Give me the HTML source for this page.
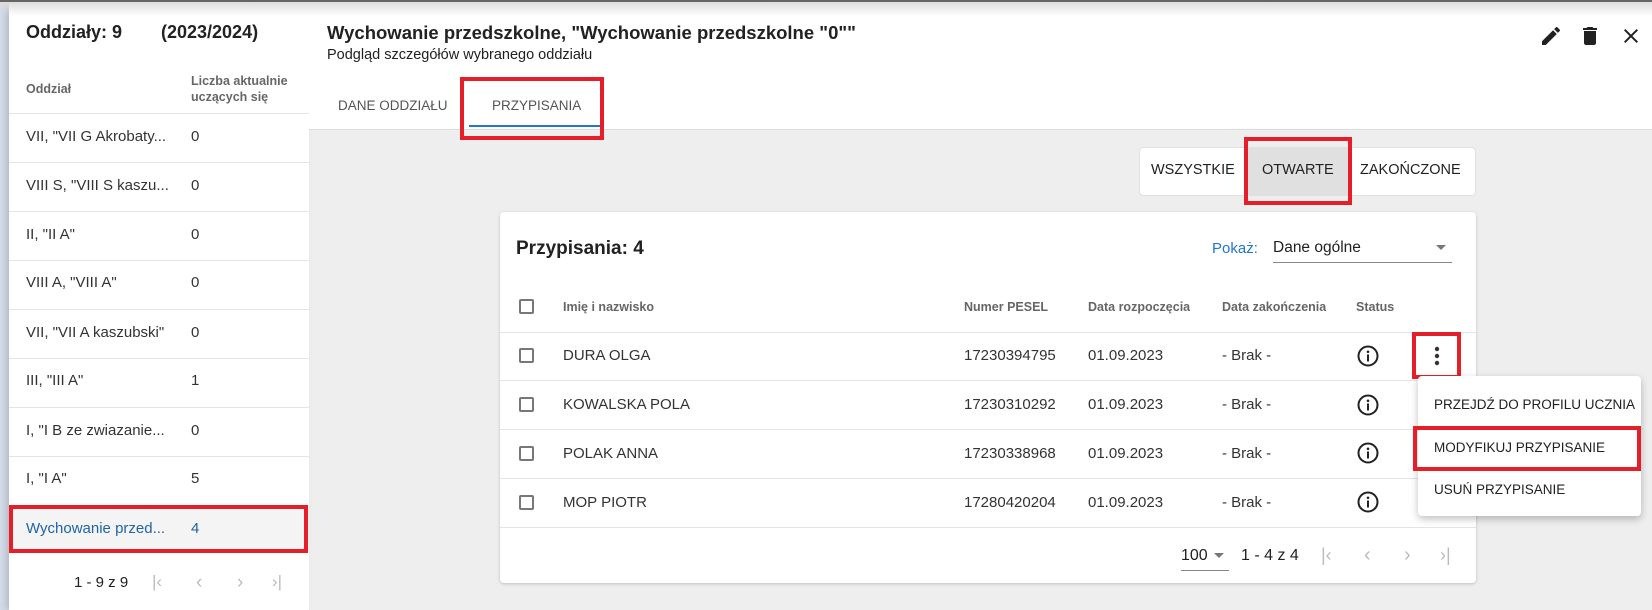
<!DOCTYPE html>
<html><head><meta charset="utf-8"><style>
*{box-sizing:border-box;margin:0;padding:0}
body{width:1652px;height:610px;overflow:hidden;position:relative;background:#eeeeee;font-family:"Liberation Sans",Roboto,sans-serif;color:#212121}
.a{position:absolute;white-space:nowrap}
.red{position:absolute;border:4px solid #e61e2a}
.hd{font-size:12.5px;font-weight:bold;color:#666}
.t{font-size:15px;color:#333}
.line{position:absolute;height:1px;background:#e4e4e4}
</style></head><body>
<div class="a" style="left:0;top:0;width:9px;height:610px;background:#d3dbe8"></div>
<div class="a" style="left:9px;top:0;width:300px;height:610px;background:#fff;box-shadow:-3px 0 6px rgba(0,0,0,.15)"></div>
<div class="a" style="left:309px;top:0;width:1343px;height:130px;background:#fff;border-bottom:1px solid #ddd"></div>
<div class="a" style="left:0;top:0;width:1652px;height:2px;background:#666"></div>
<div class="a" style="left:0;top:2px;width:1652px;height:14px;background:linear-gradient(#ddd,rgba(255,255,255,0))"></div>

<div class="a" style="left:26px;top:22px;font-size:18px;font-weight:bold">Oddziały: 9</div>
<div class="a" style="left:161px;top:22px;font-size:18px;font-weight:bold">(2023/2024)</div>
<div class="a hd" style="left:26px;top:82px">Oddział</div>
<div class="a hd" style="left:191px;top:73px;line-height:16px">Liczba aktualnie<br>uczących się</div>
<div class="line" style="left:9px;width:300px;top:113px"></div>
<div class="a t" style="left:26px;top:128px">VII, "VII G Akrobaty...</div><div class="a t" style="left:191px;top:128px">0</div>
<div class="line" style="left:9px;width:300px;top:162px"></div>
<div class="a t" style="left:26px;top:177px">VIII S, "VIII S kaszu...</div><div class="a t" style="left:191px;top:177px">0</div>
<div class="line" style="left:9px;width:300px;top:211px"></div>
<div class="a t" style="left:26px;top:226px">II, "II A"</div><div class="a t" style="left:191px;top:226px">0</div>
<div class="line" style="left:9px;width:300px;top:260px"></div>
<div class="a t" style="left:26px;top:274px">VIII A, "VIII A"</div><div class="a t" style="left:191px;top:274px">0</div>
<div class="line" style="left:9px;width:300px;top:309px"></div>
<div class="a t" style="left:26px;top:324px">VII, "VII A kaszubski"</div><div class="a t" style="left:191px;top:324px">0</div>
<div class="line" style="left:9px;width:300px;top:358px"></div>
<div class="a t" style="left:26px;top:372px">III, "III A"</div><div class="a t" style="left:191px;top:372px">1</div>
<div class="line" style="left:9px;width:300px;top:407px"></div>
<div class="a t" style="left:26px;top:422px">I, "I B ze zwiazanie...</div><div class="a t" style="left:191px;top:422px">0</div>
<div class="line" style="left:9px;width:300px;top:456px"></div>
<div class="a t" style="left:26px;top:470px">I, "I A"</div><div class="a t" style="left:191px;top:470px">5</div>
<div class="line" style="left:9px;width:300px;top:505px"></div>
<div class="a" style="left:9px;top:505px;width:300px;height:48px;background:#f4f4f4"></div>
<div class="a t" style="left:26px;top:520px;color:#1e64a6">Wychowanie przed...</div><div class="a t" style="left:191px;top:520px;color:#1e64a6">4</div>
<div class="red" style="left:9px;top:505px;width:299px;height:48px"></div>
<div class="a" style="left:74px;top:574px;font-size:15px">1 - 9 z 9</div>
<div class="a" style="left:152px;top:572px;font-size:17px;color:#bbb">|&lsaquo;</div>
<div class="a" style="left:196px;top:572px;font-size:19px;color:#bbb">&lsaquo;</div>
<div class="a" style="left:237px;top:572px;font-size:19px;color:#bbb">&rsaquo;</div>
<div class="a" style="left:272px;top:572px;font-size:17px;color:#bbb">&rsaquo;|</div>

<div class="a" style="left:327px;top:22px;font-size:18.5px;font-weight:bold;color:#222">Wychowanie przedszkolne, "Wychowanie przedszkolne "0""</div>
<div class="a" style="left:327px;top:47px;font-size:14.5px">Podgląd szczegółów wybranego oddziału</div>
<div class="a" style="left:338px;top:98px;font-size:13.5px;color:#555">DANE ODDZIAŁU</div>
<div class="a" style="left:492px;top:98px;font-size:13.5px;color:#555">PRZYPISANIA</div>
<div class="a" style="left:469px;top:125px;width:131px;height:2px;background:#1f77d0"></div>
<div class="red" style="left:460px;top:77px;width:144px;height:63px"></div>
<svg class="a" style="left:1539px;top:24px" width="24" height="24" viewBox="0 0 24 24"><path fill="#212121" d="M3 17.25V21h3.75L17.81 9.94l-3.75-3.75L3 17.25zM20.71 7.04a1 1 0 000-1.410l-2.34-2.34a1 1 0 00-1.41 0l-1.83 1.83 3.75 3.75 1.83-1.83z"/></svg>
<svg class="a" style="left:1578px;top:23px" width="24" height="26" viewBox="0 0 24 24"><path fill="#212121" d="M6 19c0 1.1.9 2 2 2h8c1.1 0 2-.9 2-2V7H6v12zM19 4h-3.5l-1-1h-5l-1 1H5v2h14V4z"/></svg>
<svg class="a" style="left:1619px;top:24px" width="24" height="24" viewBox="0 0 24 24"><path fill="#212121" d="M19 6.41L17.59 5 12 10.59 6.41 5 5 6.410 10.59 12 5 17.59 6.41 19 12 13.41 17.59 19 19 17.59 13.41 12z"/></svg>

<div class="a" style="left:1139px;top:147px;width:337px;height:49px;background:#fff;border:1px solid #e0e0e0;border-radius:4px"></div>
<div class="a" style="left:1248px;top:147px;width:100px;height:49px;background:#e0e0e0"></div>
<div class="a" style="left:1151px;top:162px;font-size:14.5px">WSZYSTKIE</div>
<div class="a" style="left:1262px;top:162px;font-size:14.5px">OTWARTE</div>
<div class="a" style="left:1360px;top:162px;font-size:14.5px">ZAKOŃCZONE</div>
<div class="red" style="left:1244px;top:137px;width:108px;height:68px"></div>

<div class="a" style="left:500px;top:212px;width:976px;height:371px;background:#fff;border-radius:4px;box-shadow:0 1px 3px rgba(0,0,0,.2)"></div>
<div class="a" style="left:516px;top:238px;font-size:19px;font-weight:bold">Przypisania: 4</div>
<div class="a" style="left:1212px;top:240px;font-size:15px;color:#1f77d0">Pokaż:</div>
<div class="a" style="left:1273px;top:239px;font-size:15.5px">Dane ogólne</div>
<div class="a" style="left:1273px;top:262px;width:179px;height:1px;background:#888"></div>
<div class="a" style="left:1436px;top:245px;border:5px solid transparent;border-top:5px solid #777"></div>

<div class="a" style="left:519px;top:299px;width:15px;height:15px;border:2px solid #777;border-radius:2px"></div>
<div class="a hd" style="left:563px;top:300px">Imię i nazwisko</div>
<div class="a hd" style="left:964px;top:300px">Numer PESEL</div>
<div class="a hd" style="left:1088px;top:300px">Data rozpoczęcia</div>
<div class="a hd" style="left:1222px;top:300px">Data zakończenia</div>
<div class="a hd" style="left:1356px;top:300px">Status</div>
<div class="line" style="left:500px;width:976px;top:332px"></div>
<div class="line" style="left:500px;width:976px;top:380px"></div>
<div class="line" style="left:500px;width:976px;top:429px"></div>
<div class="line" style="left:500px;width:976px;top:478px"></div>
<div class="line" style="left:500px;width:976px;top:527px"></div>

<div class="a" style="left:519px;top:348px;width:15px;height:15px;border:2px solid #777;border-radius:2px"></div>
<div class="a t" style="left:563px;top:347px">DURA OLGA</div><div class="a t" style="left:964px;top:347px">17230394795</div><div class="a t" style="left:1088px;top:347px">01.09.2023</div><div class="a t" style="left:1222px;top:347px">- Brak -</div>
<div class="a" style="left:519px;top:397px;width:15px;height:15px;border:2px solid #777;border-radius:2px"></div>
<div class="a t" style="left:563px;top:396px">KOWALSKA POLA</div><div class="a t" style="left:964px;top:396px">17230310292</div><div class="a t" style="left:1088px;top:396px">01.09.2023</div><div class="a t" style="left:1222px;top:396px">- Brak -</div>
<div class="a" style="left:519px;top:446px;width:15px;height:15px;border:2px solid #777;border-radius:2px"></div>
<div class="a t" style="left:563px;top:445px">POLAK ANNA</div><div class="a t" style="left:964px;top:445px">17230338968</div><div class="a t" style="left:1088px;top:445px">01.09.2023</div><div class="a t" style="left:1222px;top:445px">- Brak -</div>
<div class="a" style="left:519px;top:495px;width:15px;height:15px;border:2px solid #777;border-radius:2px"></div>
<div class="a t" style="left:563px;top:494px">MOP PIOTR</div><div class="a t" style="left:964px;top:494px">17280420204</div><div class="a t" style="left:1088px;top:494px">01.09.2023</div><div class="a t" style="left:1222px;top:494px">- Brak -</div>

<svg class="a" style="left:1356px;top:344px" width="24" height="24" viewBox="0 0 24 24"><circle cx="12" cy="12" r="9.5" fill="none" stroke="#222" stroke-width="2"/><rect x="11" y="10.5" width="2" height="7" fill="#222"/><circle cx="12" cy="7.8" r="1.3" fill="#222"/></svg>
<svg class="a" style="left:1356px;top:393px" width="24" height="24" viewBox="0 0 24 24"><circle cx="12" cy="12" r="9.5" fill="none" stroke="#222" stroke-width="2"/><rect x="11" y="10.5" width="2" height="7" fill="#222"/><circle cx="12" cy="7.8" r="1.3" fill="#222"/></svg>
<svg class="a" style="left:1356px;top:441px" width="24" height="24" viewBox="0 0 24 24"><circle cx="12" cy="12" r="9.5" fill="none" stroke="#222" stroke-width="2"/><rect x="11" y="10.5" width="2" height="7" fill="#222"/><circle cx="12" cy="7.8" r="1.3" fill="#222"/></svg>
<svg class="a" style="left:1356px;top:490px" width="24" height="24" viewBox="0 0 24 24"><circle cx="12" cy="12" r="9.5" fill="none" stroke="#222" stroke-width="2"/><rect x="11" y="10.5" width="2" height="7" fill="#222"/><circle cx="12" cy="7.8" r="1.3" fill="#222"/></svg>

<svg class="a" style="left:1429px;top:345px" width="16" height="22" viewBox="0 0 16 22"><circle cx="8" cy="4" r="2.2" fill="#333"/><circle cx="8" cy="11" r="2.2" fill="#333"/><circle cx="8" cy="18" r="2.2" fill="#333"/></svg>
<div class="red" style="left:1412px;top:332px;width:49px;height:47px"></div>

<div class="a" style="left:1181px;top:547px;font-size:16px">100</div>
<div class="a" style="left:1181px;top:570px;width:48px;height:1px;background:#888"></div>
<div class="a" style="left:1214px;top:553px;border:5px solid transparent;border-top:5px solid #777"></div>
<div class="a" style="left:1241px;top:547px;font-size:16px">1 - 4 z 4</div>
<div class="a" style="left:1321px;top:545px;font-size:18px;color:#bbb">|&lsaquo;</div>
<div class="a" style="left:1364px;top:544px;font-size:20px;color:#bbb">&lsaquo;</div>
<div class="a" style="left:1404px;top:544px;font-size:20px;color:#bbb">&rsaquo;</div>
<div class="a" style="left:1440px;top:545px;font-size:18px;color:#bbb">&rsaquo;|</div>

<div class="a" style="left:1418px;top:376px;width:223px;height:140px;background:#fff;border-radius:4px;box-shadow:0 3px 8px rgba(0,0,0,.25)"></div>
<div class="a" style="left:1434px;top:397px;font-size:13.5px">PRZEJDŹ DO PROFILU UCZNIA</div>
<div class="a" style="left:1434px;top:440px;font-size:13.5px">MODYFIKUJ PRZYPISANIE</div>
<div class="a" style="left:1434px;top:482px;font-size:13.5px">USUŃ PRZYPISANIE</div>
<div class="red" style="left:1413px;top:426px;width:228px;height:45px"></div>
</body></html>
